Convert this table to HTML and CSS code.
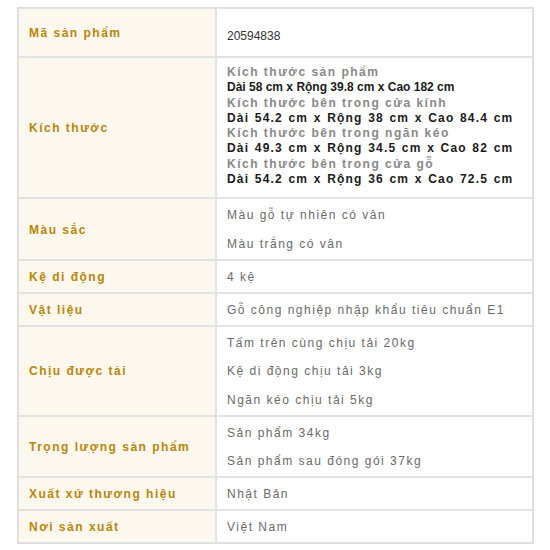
FILE: index.html
```html
<!DOCTYPE html>
<html lang="vi">
<head>
<meta charset="utf-8">
<title>Thông số sản phẩm</title>
<link rel="stylesheet" href="styles.css">
</head>
<body>
<div class="wrap">
<table class="spec">
  <tr>
    <th>Mã sản phẩm</th>
    <td class="code">20594838</td>
  </tr>
  <tr>
    <th>Kích thước</th>
    <td class="dims">
      <div class="h">Kích thước sản phẩm</div>
      <div class="d0">Dài 58 cm x Rộng 39.8 cm x Cao 182 cm</div>
      <div class="h">Kích thước bên trong cửa kính</div>
      <div class="d">Dài 54.2 cm x Rộng 38 cm x Cao 84.4 cm</div>
      <div class="h">Kích thước bên trong ngăn kéo</div>
      <div class="d">Dài 49.3 cm x Rộng 34.5 cm x Cao 82 cm</div>
      <div class="h">Kích thước bên trong cửa gỗ</div>
      <div class="d">Dài 54.2 cm x Rộng 36 cm x Cao 72.5 cm</div>
    </td>
  </tr>
  <tr>
    <th>Màu sắc</th>
    <td><p>Màu gỗ tự nhiên có vân</p><p>Màu trắng có vân</p></td>
  </tr>
  <tr>
    <th>Kệ di động</th>
    <td><p>4 kệ</p></td>
  </tr>
  <tr>
    <th>Vật liệu</th>
    <td><p>Gỗ công nghiệp nhập khẩu tiêu chuẩn E1</p></td>
  </tr>
  <tr>
    <th>Chịu được tải</th>
    <td><p>Tấm trên cùng chịu tải 20kg</p><p>Kệ di động chịu tải 3kg</p><p>Ngăn kéo chịu tải 5kg</p></td>
  </tr>
  <tr>
    <th>Trọng lượng sản phẩm</th>
    <td><p>Sản phẩm 34kg</p><p>Sản phẩm sau đóng gói 37kg</p></td>
  </tr>
  <tr>
    <th>Xuất xứ thương hiệu</th>
    <td><p>Nhật Bản</p></td>
  </tr>
  <tr>
    <th>Nơi sản xuất</th>
    <td><p>Việt Nam</p></td>
  </tr>
</table>
</div>
</body>
</html>
```
FILE: styles.css
```css
html, body {
  margin: 0;
  background: #ffffff;
  font-family: "Liberation Sans", Arial, sans-serif;
}

.wrap {
  padding: 7px 0 0 17px;
}

.spec {
  border-collapse: separate;
  border-spacing: 0;
  width: 517px;
  table-layout: fixed;
  border: 1px solid #dcdcdc;
}

.spec th,
.spec td {
  border: 1px solid #e2e2e2;
  padding: 8px 10px 7px;
  font-size: 12px;
  line-height: 16px;
  letter-spacing: 1.5px;
}

.spec th {
  width: 176px;
  background: #fdf8ee;
  color: #b8860b;
  font-weight: bold;
  text-align: left;
  vertical-align: middle;
}

.spec td {
  color: #6a6a6a;
  vertical-align: top;
}

.spec p {
  margin: 0;
}

.spec p + p {
  margin-top: 12.5px;
}

.spec td.code {
  color: #333333;
  letter-spacing: 0;
  padding-top: 19px;
  padding-bottom: 12px;
}

.spec td.dims {
  line-height: 15.3px;
  padding-top: 7px;
  padding-bottom: 10px;
  white-space: nowrap;
}

.dims .h {
  color: #888888;
  font-weight: bold;
  letter-spacing: 1.5px;
}

.dims .d0 {
  color: #1a1a1a;
  font-weight: bold;
  letter-spacing: 0;
}

.dims .d {
  color: #1a1a1a;
  font-weight: bold;
  letter-spacing: 1.2px;
  word-spacing: 1px;
}
```
